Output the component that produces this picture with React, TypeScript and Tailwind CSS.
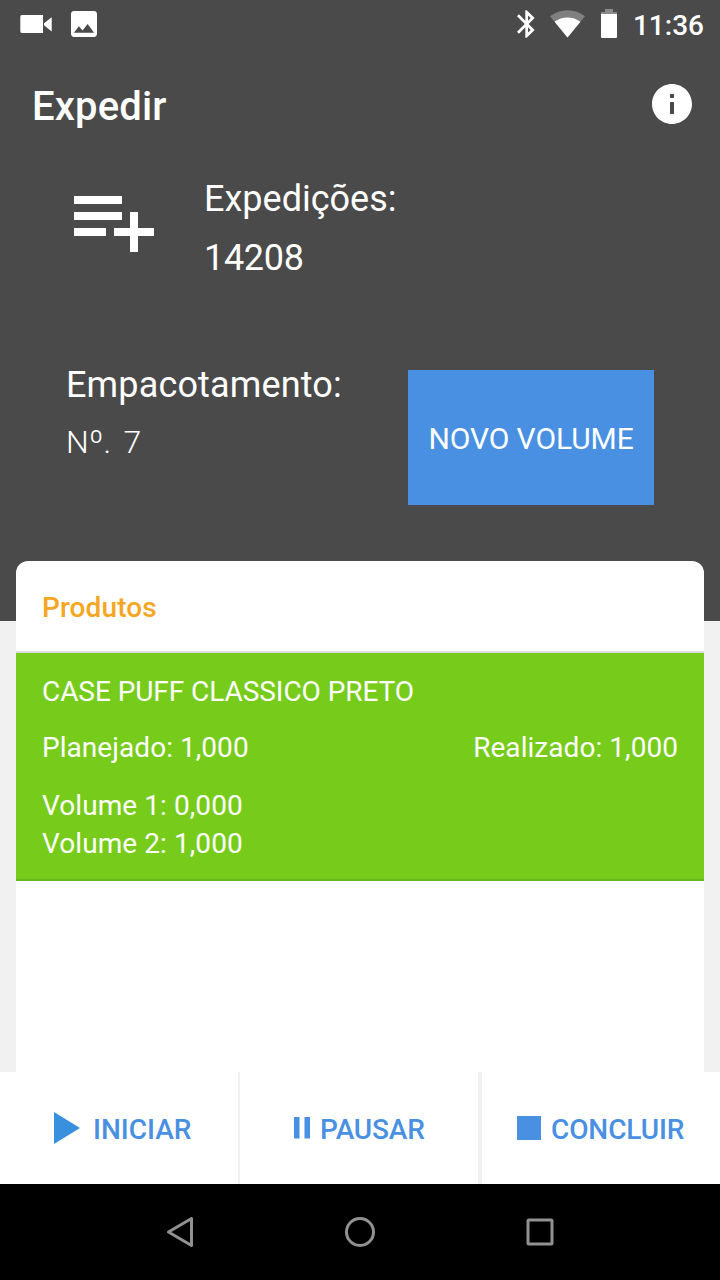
import type { ReactNode } from "react"

const product = {
  name: "CASE PUFF CLASSICO PRETO",
  planned: "1,000",
  done: "1,000",
  volumes: ["0,000", "1,000"],
}

function StatusBar() {
  return (
    <div className="flex h-12 items-center justify-between pl-5 pr-4">
      <div className="flex items-center gap-[19px]">
        <svg className="h-[18px] w-8" viewBox="0 0 32 18" fill="currentColor">
          <path d="M2.500 0H23v18H2.500A2 2 0 0 1 .3 16V2A2 2 0 0 1 2.500 0zM31.700 2.300v14.200L24 10.300V8.300z" />
        </svg>
        <svg className="h-[26px] w-[26px]" viewBox="3 3 18 18" fill="currentColor">
          <path d="M21 19V5c0-1.100-.9-2-2-2H5c-1.100 0-2 .9-2 2v14c0 1.100.9 2 2 2h14c1.100 0 2-.9 2-2zM8.500 13.500l2.500 3.010L14.500 12l4.500 6H5l3.500-4.500z" />
        </svg>
      </div>
      <div className="flex items-center">
        <svg className="mr-[15px] h-7 w-[18px]" viewBox="5 2 13 20" fill="currentColor">
          <path d="M17.710 7.710L12 2h-1v7.590L6.410 5 5 6.410 10.590 12 5 17.590 6.410 19 11 14.410V22h1l5.710-5.710-4.300-4.290 4.300-4.290zM13 5.830l1.880 1.880L13 9.590V5.830zm1.880 10.460L13 18.170v-3.760l1.880 1.880z" />
        </svg>
        <svg className="mr-4 -mt-px h-7 w-[35px]" viewBox="0 0 35 28" fill="currentColor">
          <path d="M17.500 27.500L0 6.200C10-1.900 25-1.900 35 6.200z" fillOpacity=".3" />
          <path d="M17.500 27.500L4.600 11.800C12 5.900 23 5.900 30.400 11.800z" />
        </svg>
        <svg className="-mt-px mr-4 h-[29px] w-4" viewBox="0 0 16 29">
          <path d="M4 0h8v3h4v2H0V3h4z" fill="#8a8a8a" />
          <path d="M0 5h16v23a1 1 0 0 1-1 1H1a1 1 0 0 1-1-1z" fill="currentColor" />
        </svg>
        <span className="mt-[3px] text-[28px] leading-8 font-medium">11:36</span>
      </div>
    </div>
  )
}

function ActionButton({ label, icon, className }: { label: string; icon: ReactNode; className: string }) {
  return (
    <button className={`flex items-center bg-white text-[#4990e2] ${className}`}>
      {icon}
      <span className="mt-[3px] text-[28px] leading-8 font-medium">{label}</span>
    </button>
  )
}

export default function App() {
  return (
    <div className="flex h-[1280px] w-[720px] flex-col overflow-hidden bg-[#f1f1f1] font-[Roboto,sans-serif] text-white">
      {/* Dark header */}
      <header className="h-[621px] shrink-0 bg-[#4a4a4a]">
        <StatusBar />

        <div className="flex h-28 items-center justify-between pl-8 pr-6">
          <h1 className="mt-1.5 text-[40px] leading-[48px] font-medium tracking-[0.15px]">Expedir</h1>
          <svg className="h-12 w-12" viewBox="0 0 24 24" fill="currentColor">
            <path d="M12 2C6.480 2 2 6.480 2 12s4.480 10 10 10 10-4.480 10-10S17.520 2 12 2zm1 15h-2v-6h2v6zm0-8h-2V7h2v2z" />
          </svg>
        </div>

        <div className="flex pl-[66px] pt-2.5">
          <svg className="mt-0.5 h-24 w-24" viewBox="0 0 24 24" fill="currentColor">
            <path d="M14 10H2v2h12v-2zm0-4H2v2h12V6zm4 8v-4h-2v4h-4v2h4v4h2v-4h4v-2h-4zM2 16h8v-2H2v2z" />
          </svg>
          <div className="ml-[42px] text-[36px] leading-[59px]">
            <p>Expedições:</p>
            <p className="tracking-[-0.3px]">14208</p>
          </div>
        </div>

        <div className="mt-[67px] flex justify-between pl-[66px] pr-[66px]">
          <div>
            <p className="text-[36px] leading-[60px] tracking-[0.15px]">Empacotamento:</p>
            <p className="text-[32px] leading-[54px] font-light tracking-[0.2px] [word-spacing:4px]">Nº. 7</p>
          </div>
          <button className="mt-[15px] h-[135px] w-[246px] bg-[#4990e2] pt-0.5 text-[30px] tracking-[-0.1px]">
            NOVO VOLUME
          </button>
        </div>
      </header>

      {/* Product list */}
      <main className="relative mx-4 -mt-[60px] flex-1 rounded-t-xl bg-white">
        <h2 className="h-[92px] border-b-2 border-[#dddddd] px-[26px] pt-px text-[28px] leading-[91px] font-medium tracking-[0.1px] text-[#f5a623]">
          Produtos
        </h2>
        <div className="h-[228px] border-b-2 border-[#68b618] bg-[#77cc1b] px-[26px] pt-[11px] text-[28px]">
          <p className="leading-[56px] tracking-[-0.06px]">{product.name}</p>
          <div className="mt-3 flex justify-between leading-8 tracking-[0.05px]">
            <p>Planejado: {product.planned}</p>
            <p>Realizado: {product.done}</p>
          </div>
          <div className="mt-[23px] leading-[38px] tracking-[0.07px]">
            {product.volumes.map((v, i) => (
              <p key={i}>Volume {i + 1}: {v}</p>
            ))}
          </div>
        </div>
      </main>

      {/* Actions */}
      <footer className="flex h-28 shrink-0">
        <ActionButton
          label="INICIAR"
          className="mr-0.5 w-[238px] pl-[54px]"
          icon={
            <svg className="mr-[13px] h-8 w-[26px]" viewBox="0 0 26 32">
              <path d="M0 0l26 16L0 32z" fill="#3890df" />
            </svg>
          }
        />
        <ActionButton
          label="PAUSAR"
          className="mr-1 w-[238px] pl-[54px] tracking-[-0.15px]"
          icon={
            <svg className="mr-2.5 h-[22px] w-4" viewBox="0 0 16 22" fill="currentColor">
              <path d="M0 0h5.500v21.500H0zM10.500 0H16v21.500h-5.500z" />
            </svg>
          }
        />
        <ActionButton
          label="CONCLUIR"
          className="w-[238px] pl-[35px] tracking-[-0.1px]"
          icon={<span className="mr-2.5 h-6 w-6 bg-[#4990e2]" />}
        />
      </footer>

      {/* System navigation */}
      <nav className="flex h-24 shrink-0 items-center justify-center gap-[148px] bg-black text-[#919191]">
        <svg className="h-8 w-8" viewBox="0 0 32 32" fill="none" stroke="currentColor" strokeWidth="3" strokeLinejoin="round">
          <path d="M27.500 2.500v27L4.500 16z" />
        </svg>
        <svg className="h-8 w-8" viewBox="0 0 32 32" fill="none" stroke="currentColor" strokeWidth="3">
          <circle cx="16" cy="16" r="13.500" />
        </svg>
        <svg className="h-8 w-8" viewBox="0 0 32 32" fill="none" stroke="currentColor" strokeWidth="3">
          <rect x="4" y="4" width="24" height="24" rx="1" />
        </svg>
      </nav>
    </div>
  )
}
